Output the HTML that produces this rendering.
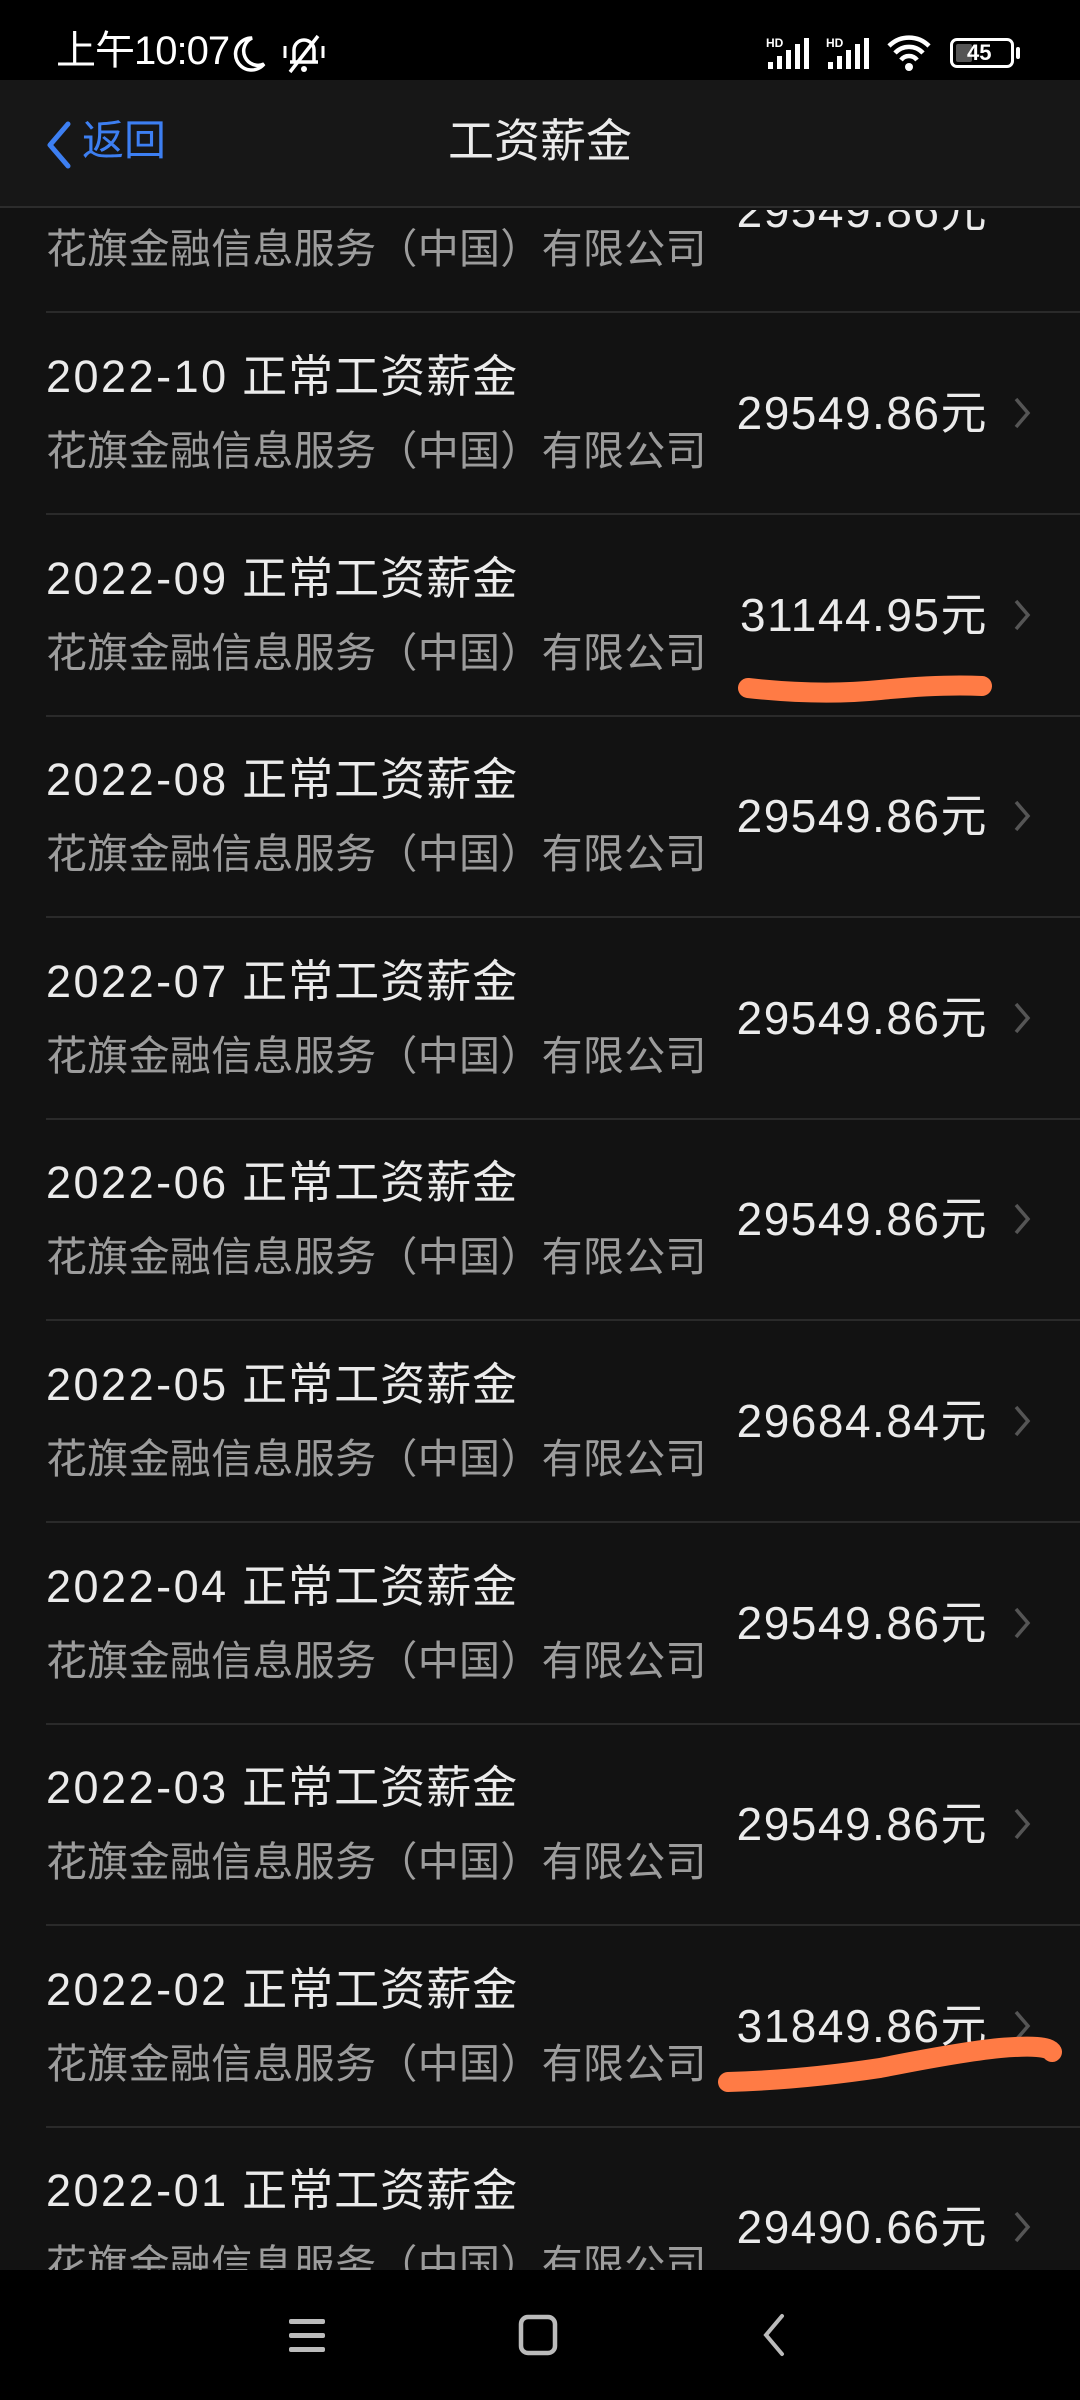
<!DOCTYPE html>
<html><head><meta charset="utf-8"><style>
*{margin:0;padding:0;box-sizing:border-box}
body{width:1080px;height:2400px;background:#121212;position:relative;overflow:hidden;font-family:"Liberation Sans","Noto Sans CJK SC",sans-serif}
.sb{position:absolute;left:0;top:0;width:1080px;height:80px;background:#000;color:#fff}
.hd{position:absolute;left:0;top:80px;width:1080px;height:128px;background:#171717;border-bottom:2px solid #2c2c2c}
.list{position:absolute;left:0;top:210px;width:1080px;height:2060px;overflow:hidden;background:#121212}
.row{position:absolute;left:0;width:1080px;height:202px}
.row .sep{position:absolute;left:46px;right:0;bottom:0;height:2px;background:#2a2a2a}
.t{position:absolute;left:46px;top:38px;font-size:45px;color:#ebebeb;white-space:nowrap;line-height:52px;letter-spacing:1px}
.t b{font-weight:normal;letter-spacing:2.5px}
.s{position:absolute;left:46px;top:114px;font-size:41px;color:#9c9c9c;white-space:nowrap;line-height:48px;letter-spacing:0.3px}
.a{position:absolute;right:92px;top:74px;font-size:46px;color:#ebebeb;line-height:52px;white-space:nowrap;letter-spacing:1.5px}
.c{position:absolute;left:1012px;top:82px}
.nav{position:absolute;left:0;top:2270px;width:1080px;height:130px;background:#000}
</style></head><body>
<div class="sb">
 <div style="position:absolute;left:56px;top:28px;font-size:40px;line-height:46px;letter-spacing:-1px">上午10:07</div>
 <svg style="position:absolute;left:228px;top:34px" width="40" height="40" viewBox="0 0 40 40"><path d="M24 4 A16 16 0 1 0 36 30 A14 14 0 0 1 24 4Z" fill="none" stroke="#fff" stroke-width="3.5"/></svg>
 <svg style="position:absolute;left:280px;top:32px" width="48" height="44" viewBox="0 0 48 44"><path d="M14 30 V18 a10 10 0 0 1 20 0 V30 H10 M38 30 H34" fill="none" stroke="#fff" stroke-width="3.5"/><circle cx="24" cy="37" r="3" fill="#fff"/><line x1="10" y1="40" x2="38" y2="4" stroke="#fff" stroke-width="3.5"/><path d="M5 14 v12 M43 14 v12" stroke="#fff" stroke-width="3"/></svg>
 <div style="position:absolute;left:766px;top:36px;font-size:12px;font-weight:bold">HD</div>
 <svg style="position:absolute;left:766px;top:36px" width="46" height="34"><rect x="2" y="26" width="5" height="7" fill="#fff"/><rect x="11" y="20" width="5" height="13" fill="#fff"/><rect x="20" y="14" width="5" height="19" fill="#fff"/><rect x="29" y="8" width="5" height="25" fill="#fff"/><rect x="38" y="2" width="5" height="31" fill="#fff"/></svg>
 <div style="position:absolute;left:826px;top:36px;font-size:12px;font-weight:bold">HD</div>
 <svg style="position:absolute;left:826px;top:36px" width="46" height="34"><rect x="2" y="26" width="5" height="7" fill="#fff"/><rect x="11" y="20" width="5" height="13" fill="#fff"/><rect x="20" y="14" width="5" height="19" fill="#fff"/><rect x="29" y="8" width="5" height="25" fill="#fff"/><rect x="38" y="2" width="5" height="31" fill="#fff"/></svg>
 <svg style="position:absolute;left:886px;top:34px" width="46" height="38" viewBox="0 0 46 38"><path d="M3 12 a28 28 0 0 1 40 0 M9 19 a19 19 0 0 1 28 0 M15 26 a10 10 0 0 1 16 0" fill="none" stroke="#fff" stroke-width="4.5"/><circle cx="23" cy="33" r="4" fill="#fff"/></svg>
 <div style="position:absolute;left:950px;top:38px;width:64px;height:30px;border:3px solid #fff;border-radius:7px"><div style="position:absolute;left:3px;top:3px;width:16px;height:18px;background:#555;border-radius:2px"></div><div style="position:absolute;left:14px;top:-1px;font-size:22px;color:#fff;font-weight:bold">45</div></div>
 <div style="position:absolute;left:1016px;top:47px;width:4px;height:12px;background:#fff;border-radius:2px"></div>
</div>
<div class="hd">
 <svg style="position:absolute;left:42px;top:40px" width="32" height="50" viewBox="0 0 32 50"><path d="M26 4 L8 25 L26 46" fill="none" stroke="#3d7ff2" stroke-width="5" stroke-linecap="round" stroke-linejoin="round"/></svg>
 <div style="position:absolute;left:82px;top:36px;font-size:42px;color:#3d7ff2;line-height:50px">返回</div>
 <div style="position:absolute;left:0;width:1080px;top:34px;text-align:center;font-size:46px;color:#ebebeb;line-height:54px">工资薪金</div>
</div>
<div class="list">
 <div class="row" style="top:-99px"><div class="t"><b>2022-11</b> 正常工资薪金</div><div class="s">花旗金融信息服务（中国）有限公司</div><div class="a">29549.86元</div><div class="sep"></div></div>
 <div class="row" style="top:103px"><div class="t"><b>2022-10</b> 正常工资薪金</div><div class="s">花旗金融信息服务（中国）有限公司</div><div class="a">29549.86元</div><svg class="c" width="20" height="36"><path d="M4 4 L16 18 L4 32" fill="none" stroke="#555" stroke-width="3.5"/></svg><div class="sep"></div></div>
 <div class="row" style="top:305px"><div class="t"><b>2022-09</b> 正常工资薪金</div><div class="s">花旗金融信息服务（中国）有限公司</div><div class="a">31144.95元</div><svg class="c" width="20" height="36"><path d="M4 4 L16 18 L4 32" fill="none" stroke="#555" stroke-width="3.5"/></svg><div class="sep"></div></div>
 <div class="row" style="top:506px"><div class="t"><b>2022-08</b> 正常工资薪金</div><div class="s">花旗金融信息服务（中国）有限公司</div><div class="a">29549.86元</div><svg class="c" width="20" height="36"><path d="M4 4 L16 18 L4 32" fill="none" stroke="#555" stroke-width="3.5"/></svg><div class="sep"></div></div>
 <div class="row" style="top:708px"><div class="t"><b>2022-07</b> 正常工资薪金</div><div class="s">花旗金融信息服务（中国）有限公司</div><div class="a">29549.86元</div><svg class="c" width="20" height="36"><path d="M4 4 L16 18 L4 32" fill="none" stroke="#555" stroke-width="3.5"/></svg><div class="sep"></div></div>
 <div class="row" style="top:909px"><div class="t"><b>2022-06</b> 正常工资薪金</div><div class="s">花旗金融信息服务（中国）有限公司</div><div class="a">29549.86元</div><svg class="c" width="20" height="36"><path d="M4 4 L16 18 L4 32" fill="none" stroke="#555" stroke-width="3.5"/></svg><div class="sep"></div></div>
 <div class="row" style="top:1111px"><div class="t"><b>2022-05</b> 正常工资薪金</div><div class="s">花旗金融信息服务（中国）有限公司</div><div class="a">29684.84元</div><svg class="c" width="20" height="36"><path d="M4 4 L16 18 L4 32" fill="none" stroke="#555" stroke-width="3.5"/></svg><div class="sep"></div></div>
 <div class="row" style="top:1313px"><div class="t"><b>2022-04</b> 正常工资薪金</div><div class="s">花旗金融信息服务（中国）有限公司</div><div class="a">29549.86元</div><svg class="c" width="20" height="36"><path d="M4 4 L16 18 L4 32" fill="none" stroke="#555" stroke-width="3.5"/></svg><div class="sep"></div></div>
 <div class="row" style="top:1514px"><div class="t"><b>2022-03</b> 正常工资薪金</div><div class="s">花旗金融信息服务（中国）有限公司</div><div class="a">29549.86元</div><svg class="c" width="20" height="36"><path d="M4 4 L16 18 L4 32" fill="none" stroke="#555" stroke-width="3.5"/></svg><div class="sep"></div></div>
 <div class="row" style="top:1716px"><div class="t"><b>2022-02</b> 正常工资薪金</div><div class="s">花旗金融信息服务（中国）有限公司</div><div class="a">31849.86元</div><svg class="c" width="20" height="36"><path d="M4 4 L16 18 L4 32" fill="none" stroke="#555" stroke-width="3.5"/></svg><div class="sep"></div></div>
 <div class="row" style="top:1917px"><div class="t"><b>2022-01</b> 正常工资薪金</div><div class="s">花旗金融信息服务（中国）有限公司</div><div class="a">29490.66元</div><svg class="c" width="20" height="36"><path d="M4 4 L16 18 L4 32" fill="none" stroke="#555" stroke-width="3.5"/></svg><div class="sep"></div></div>
</div>
<svg style="position:absolute;left:0;top:0" width="1080" height="2270">
 <path d="M748 688 Q820 696 880 690 Q940 684 982 686" fill="none" stroke="#ff7b45" stroke-width="20" stroke-linecap="round"/>
 <path d="M728 2082 Q800 2080 880 2068 Q960 2052 1000 2048 Q1048 2044 1052 2052" fill="none" stroke="#ff7b45" stroke-width="20" stroke-linecap="round"/>
</svg>
<div class="nav">
 <svg style="position:absolute;left:287px;top:46px" width="40" height="40"><rect x="2" y="3" width="36" height="5" rx="2" fill="#bbb"/><rect x="2" y="17" width="36" height="5" rx="2" fill="#bbb"/><rect x="2" y="31" width="36" height="5" rx="2" fill="#bbb"/></svg>
 <svg style="position:absolute;left:518px;top:44px" width="40" height="42"><rect x="3" y="3" width="34" height="36" rx="7" fill="none" stroke="#bbb" stroke-width="4.5"/></svg>
 <svg style="position:absolute;left:758px;top:42px" width="30" height="46"><path d="M24 4 L8 23 L24 42" fill="none" stroke="#bbb" stroke-width="4" stroke-linecap="round"/></svg>
</div>
</body></html>
